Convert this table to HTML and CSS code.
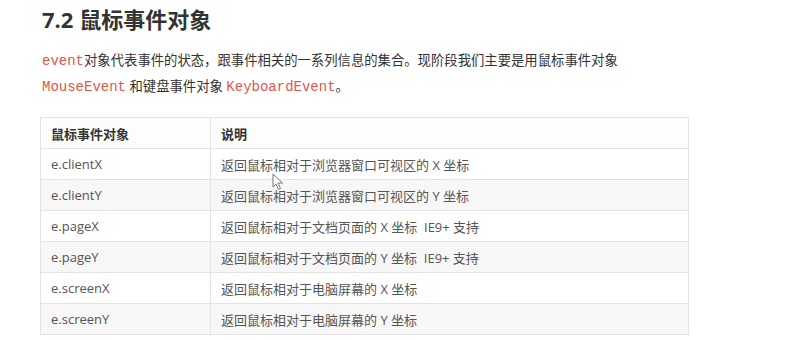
FILE: index.html
```html
<!DOCTYPE html>
<html lang="zh">
<head>
<meta charset="utf-8">
<link rel="stylesheet" href="styles.css">
</head>
<body>
<div class="page">
  <h2 class="title">7.2 鼠标事件对象</h2>
  <p class="desc"><code>event</code>对象代表事件的状态，跟事件相关的一系列信息的集合。现阶段我们主要是用鼠标事件对象<br><code>MouseEvent</code> 和键盘事件对象 <code>KeyboardEvent</code>。</p>
  <table class="tbl">
    <thead>
      <tr><th class="c1">鼠标事件对象</th><th>说明</th></tr>
    </thead>
    <tbody>
      <tr><td class="c1">e.clientX</td><td>返回鼠标相对于浏览器窗口可视区的 X 坐标</td></tr>
      <tr><td class="c1">e.clientY</td><td>返回鼠标相对于浏览器窗口可视区的 Y 坐标</td></tr>
      <tr><td class="c1">e.pageX</td><td>返回鼠标相对于文档页面的 X 坐标&nbsp; IE9+ 支持</td></tr>
      <tr><td class="c1">e.pageY</td><td>返回鼠标相对于文档页面的 Y 坐标&nbsp; IE9+ 支持</td></tr>
      <tr><td class="c1">e.screenX</td><td>返回鼠标相对于电脑屏幕的 X 坐标</td></tr>
      <tr><td class="c1">e.screenY</td><td>返回鼠标相对于电脑屏幕的 Y 坐标</td></tr>
    </tbody>
  </table>
</div>
<svg class="cursor" width="12" height="18" viewBox="0 0 12 18"><path d="M1 1 L1 14 L4 11 L6.5 16.5 L8.5 15.5 L6 10 L10.5 10 Z" fill="#fff" stroke="#777" stroke-width="1"/></svg>
</body>
</html>
```
FILE: styles.css
```css
html, body {
  margin: 0;
  padding: 0;
  background: #fff;
}
.page {
  padding: 4px 0 0 42px;
  font-family: "Open Sans", "Noto Sans CJK SC", sans-serif;
  color: #333;
}
.title {
  margin: 0;
  font-size: 22px;
  line-height: 30px;
  font-weight: 700;
  color: #333;
  font-family: "Open Sans", "Noto Sans CJK SC", sans-serif;
}
.desc {
  margin: 14px 0 0 0;
  font-size: 13.35px;
  line-height: 25px;
  color: #333;
}
.desc code {
  font-family: "Liberation Mono", monospace;
  font-size: 14px;
  color: #e2564b;
}
.tbl {
  margin: 17px 0 0 -2px;
  width: 649px;
  border-collapse: collapse;
  font-size: 13px;
  color: #555;
}
.tbl th, .tbl td {
  border: 1px solid #e3e3e3;
  height: 31px;
  padding: 0 10px;
  text-align: left;
  box-sizing: border-box;
}
.tbl th {
  font-weight: 700;
  color: #333;
  background: #fdfdfd;
}
.tbl .c1 {
  width: 170px;
}
.tbl tbody tr:nth-child(even) td {
  background: #f7f7f7;
}
.cursor {
  position: absolute;
  left: 272px;
  top: 173px;
}
```
